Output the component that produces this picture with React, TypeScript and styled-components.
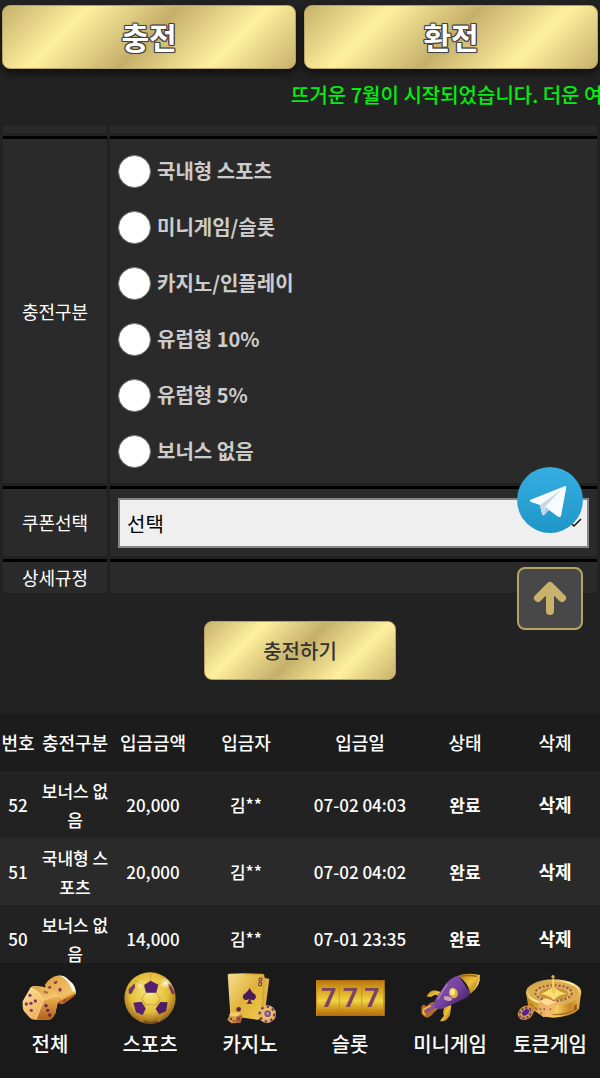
import React from "react";
import styled, { createGlobalStyle } from "styled-components";

const GlobalStyle = createGlobalStyle`
  *, *::before, *::after { box-sizing: border-box; }
  body {
    margin: 0;
    background: #222;
    color: #fff;
    font-family: "Noto Sans CJK KR", "Noto Sans", sans-serif;
  }
  button, select, input { font-family: inherit; }
`;

const gold =
  "linear-gradient(135deg, #c5b06a 0%, #fff09e 25%, #c5b06a 50%, #fff09e 75%, #c5b06a 100%)";

const Page = styled.div`
  display: flex;
  flex-direction: column;
  height: 100vh;
  overflow: hidden;
`;

const TopBar = styled.header`
  display: grid;
  grid-template-columns: 1fr 1fr;
  gap: 8px;
  padding: 5px 2px 0;
`;

const GoldButton = styled.button`
  border: 1px solid #b9a561;
  border-radius: 8px;
  background: ${gold};
  background-origin: border-box;
  cursor: pointer;
`;

const TopButton = styled(GoldButton)`
  height: 64px;
  padding: 0 0 2px;
  box-shadow: 0 4px 8px rgba(0, 0, 0, 0.6);
  color: #fff;
  font-size: 30px;
  font-weight: 700;
  line-height: 44px;
  text-shadow: -1px -1px 0 #444, 0 -1px 0 #444, 1px -1px 0 #444, -1px 0 0 #444,
    1px 0 0 #444, -1px 1px 0 #444, 0 1px 0 #444, 1px 1px 0 #444, 0 0 2px #444;
`;

const Notice = styled.p`
  margin: 0;
  padding: 11px 0 16px 291px;
  overflow: hidden;
  color: #00f010;
  font-size: 20px;
  font-weight: 500;
  line-height: 30px;
  white-space: nowrap;
`;

const Content = styled.main`
  flex: 1;
  min-height: 0;
  overflow-y: auto;
  scrollbar-width: none;
`;

const FormTable = styled.table`
  width: 100%;
  margin-top: -3px;
  border-collapse: separate;
  border-spacing: 3px;
  table-layout: fixed;
`;

const LabelCell = styled.th`
  width: 104px;
  padding: 0;
  border-top: 3px solid #000;
  background: #2a2a2a;
  font-size: 18px;
  font-weight: 400;
  line-height: 31px;
`;

const FieldCell = styled.td`
  padding: 0 8px;
  border-top: 3px solid #000;
  background: #2a2a2a;
`;

const EndCell = styled.td<{ $label?: boolean }>`
  width: ${(p) => (p.$label ? "104px" : "auto")};
  height: 7px;
  padding: 0;
  background: #2a2a2a;
`;

const RadioList = styled.div`
  display: flex;
  flex-direction: column;
  padding: 4px 0;
`;

const RadioLabel = styled.label`
  display: flex;
  align-items: center;
  gap: 6px;
  height: 56px;
  color: #ccc;
  font-size: 20px;
  font-weight: 700;
  line-height: 30px;
`;

const Radio = styled.input`
  appearance: none;
  width: 33px;
  height: 33px;
  margin: 0;
  border: 1px solid #767676;
  border-radius: 50%;
  background: #fff;
  &:checked { box-shadow: inset 0 0 0 8px #fff, inset 0 0 0 20px #0075ff; }
`;

const SelectWrap = styled.div`
  position: relative;
  margin: 9px 0 8px;
`;

const Select = styled.select`
  appearance: none;
  display: block;
  width: 100%;
  height: 50px;
  padding: 0 30px 0 7px;
  border: 2px solid #858585;
  border-radius: 0;
  background: #efefef;
  color: #000;
  font-size: 20px;
`;

const Chevron = styled.svg`
  position: absolute;
  top: 20px;
  right: 7px;
  width: 16px;
  height: 10px;
  pointer-events: none;
`;

const SubmitRow = styled.div`
  display: flex;
  justify-content: center;
  padding: 25px 0 33px;
`;

const SubmitButton = styled(GoldButton)`
  width: 32%;
  height: 59px;
  color: #333;
  font-size: 20px;
  font-weight: 500;
`;

const HistoryTable = styled.table`
  width: 100%;
  border-collapse: collapse;
  table-layout: fixed;
  text-align: center;
`;

const HistoryHead = styled.th<{ $width: number }>`
  width: ${(p) => p.$width}%;
  height: 58px;
  padding: 0;
  background: #1c1c1c;
  font-size: 18px;
  font-weight: 500;
  white-space: nowrap;
`;

const HistoryRow = styled.tr`
  background: #222;
  &:nth-child(even) { background: #2a2a2a; }
`;

const HistoryCell = styled.td<{ $bold?: boolean }>`
  height: 67px;
  padding: 0 4px;
  font-size: 17px;
  font-weight: ${(p) => (p.$bold ? 700 : 500)};
  line-height: 29px;
  word-break: break-all;
`;

const NumberCell = styled(HistoryCell)`
  padding: 0;
  white-space: nowrap;
`;

const DeleteButton = styled.button`
  padding: 0;
  border: 0;
  background: none;
  color: #fff;
  font-size: 18px;
  font-weight: 700;
  cursor: pointer;
`;

const Floating = styled.div`
  position: fixed;
  right: 17px;
  bottom: 448px;
  display: flex;
  flex-direction: column;
  gap: 34px;
`;

const TelegramLink = styled.a`
  display: block;
  height: 66px;
  svg { display: block; width: 66px; height: 66px; }
`;

const UpButton = styled.button`
  display: flex;
  align-items: center;
  justify-content: center;
  width: 66px;
  height: 63px;
  padding: 0;
  border: 2px solid #b7a363;
  border-radius: 8px;
  background: #484848;
  cursor: pointer;
  svg { width: 36px; height: 36px; }
`;

const BottomNav = styled.nav`
  display: grid;
  grid-template-columns: repeat(6, 1fr);
  padding: 9px 0 19px;
  background: #1a1a1a;
`;

const NavLink = styled.a`
  display: flex;
  flex-direction: column;
  align-items: center;
  gap: 3px;
  color: #fff;
  font-size: 20px;
  font-weight: 500;
  line-height: 30px;
  text-decoration: none;
  white-space: nowrap;
  svg { width: 72px; height: 54px; }
`;

const DiceIcon = () => (
  <svg viewBox="42 66 216 162" aria-hidden="true">
    <defs>
      <linearGradient id="diceTop" x1="0" y1="0" x2="1" y2="1">
        <stop offset="0" stopColor="#dd9f3c" />
        <stop offset="1" stopColor="#f8d27c" />
      </linearGradient>
      <linearGradient id="diceLeft" x1="0" y1="0" x2="1" y2="1">
        <stop offset="0" stopColor="#ffe0a0" />
        <stop offset="1" stopColor="#e89a3c" />
      </linearGradient>
      <linearGradient id="diceRight" x1="0" y1="0" x2="0" y2="1">
        <stop offset="0" stopColor="#f0b455" />
        <stop offset="1" stopColor="#b05f1c" />
      </linearGradient>
    </defs>
    <path d="M135 104 Q150 80 178 76 Q187 76 195 81 L218 101 Q229 122 227 133 L203 150 Q188 163 176 158 L138 128Z" fill="url(#diceTop)" />
    <path d="M181 77 Q190 76 200 84 L219 102 Q229 118 227 132 Q218 127 211 107 Q199 86 181 77Z" fill="#fff9ef" />
    <path d="M176 146 L226 127 Q228 134 222 139 L196 158 Q184 166 176 160Z" fill="#b9641f" />
    <path d="M179 144 L225 123 L224 131 L178 154Z" fill="#efb04f" />
    <g fill="#8a3f52">
      <ellipse cx="167" cy="97" rx="6" ry="4" transform="rotate(-35 167 97)" />
      <ellipse cx="149" cy="112" rx="5" ry="4" transform="rotate(-35 149 112)" />
      <ellipse cx="180" cy="119" rx="5" ry="6" />
      <circle cx="194" cy="151" r="4" />
    </g>
    <path d="M92 112 Q98 108 106 108 L128 110 L168 127 Q177 134 177 143 L166 190 Q158 207 148 209 L106 209 Q97 210 90 204 L72 184 Q68 178 68 168 L68 154Z" fill="url(#diceLeft)" />
    <path d="M94 112 Q100 108 110 109 L163 124 Q175 131 175 139 L130 152 Q128 128 94 112Z" fill="url(#diceTop)" />
    <path d="M130 152 L176 138 L166 190 Q158 208 146 209 L109 207Z" fill="url(#diceRight)" />
    <path d="M93 113 Q124 132 130 152 L109 207" fill="none" stroke="#ffe3a0" strokeWidth="2" />
    <g fill="#833a5a">
      <circle cx="90" cy="136" r="5" /><circle cx="106" cy="153" r="5" />
      <circle cx="79" cy="162" r="5" /><circle cx="93" cy="160" r="5" />
      <circle cx="94" cy="181" r="5" />
      <ellipse cx="137" cy="127" rx="8" ry="4" transform="rotate(16 137 127)" fill="#ba704b" />
    </g>
    <g fill="#672746">
      <circle cx="138" cy="167" r="5" /><circle cx="143" cy="181" r="5" /><circle cx="149" cy="195" r="5" />
    </g>
  </svg>
);

const BallIcon = () => (
  <svg viewBox="342 66 216 162" aria-hidden="true">
    <defs>
      <radialGradient id="ballGold" cx=".48" cy=".4" r=".58">
        <stop offset="0" stopColor="#f8e879" />
        <stop offset=".65" stopColor="#e4bd38" />
        <stop offset="1" stopColor="#9d681f" />
      </radialGradient>
      <radialGradient id="ballGlow">
        <stop offset="0" stopColor="#fff" stopOpacity=".95" />
        <stop offset="1" stopColor="#fff3a0" stopOpacity="0" />
      </radialGradient>
      <clipPath id="ballClip"><circle cx="450" cy="144" r="77" /></clipPath>
    </defs>
    <circle cx="450" cy="144" r="77" fill="url(#ballGold)" />
    <g clipPath="url(#ballClip)">
      <g fill="none" stroke="#c4973a" strokeWidth="2">
        <path d="M452 94 V66 M436 128 L425 146 L436 165 M469 127 L481 146 L469 165 M425 146 L437 164 H469 L481 146 M433 104 L404 91 M474 103 L500 91 M437 164 L427 177 M469 164 L477 176 M418 194 L425 219 M485 192 L475 219" />
      </g>
      <path d="M452 92 L475 104 L469 128 H438 L432 105Z" fill="#55206f" />
      <path d="M400 158 L425 155 L437 176 L428 195 L408 187Z" fill="#58206c" />
      <path d="M481 156 L503 157 L498 184 L477 193 L467 176Z" fill="#4f1c65" />
      <path d="M386 117 L404 100 L405 112 L394 132 L386 131Z" fill="#74366f" />
      <path d="M502 101 L510 102 L525 131 L516 132Z" fill="#74336e" />
      <path d="M430 211 L451 216 L474 211 L466 225 H438Z" fill="#76501e" />
      <ellipse cx="497" cy="99" rx="22" ry="18" fill="url(#ballGlow)" />
      <ellipse cx="421" cy="105" rx="15" ry="18" fill="url(#ballGlow)" opacity=".55" />
    </g>
  </svg>
);

const CardsIcon = () => (
  <svg viewBox="42 66 216 162" aria-hidden="true">
    <defs>
      <linearGradient id="cardFace" x1="0" y1="0" x2="1" y2="1">
        <stop offset="0" stopColor="#f8dd8c" />
        <stop offset=".5" stopColor="#e0b23a" />
        <stop offset="1" stopColor="#f1cb4c" />
      </linearGradient>
    </defs>
    <path d="M83 76 Q82 71 88 71 L137 70 L132 180 L91 191Z" fill="#ecd084" />
    <path d="M190 82 L208 87 L196 177 L167 205Z" fill="#e0b244" />
    <path d="M134 73 Q135 70 140 70 L188 72 Q193 73 193 77 L188 190 L130 182Z" fill="#e0b23c" stroke="#b0832a" />
    <path d="M91 77 Q92 72 98 73 L183 77 Q190 78 190 84 L178 206 Q176 211 169 209 L96 199 Q90 197 90 190Z" fill="url(#cardFace)" />
    <path d="M149 114 Q153 126 166 134 Q171 145 161 150 Q156 152 151 147 Q151 156 158 161 H139 Q146 156 147 147 Q137 153 131 147 Q124 137 136 130 Q145 122 149 114Z" fill="#461b58" />
    <path d="M178 84 h8 l-1 9 h-8z M177 97 l8 1 -1 10 -8-1z" fill="none" stroke="#6d314d" strokeWidth="3" />
    <circle cx="116" cy="178" r="7" fill="#5d244e" />
    <path d="M94 187 L123 189 L128 198 L121 218 L94 220 L82 209Z" fill="#d99d43" />
    <path d="M94 187 L123 189 L109 200 L86 196Z" fill="#f5cd73" />
    <path d="M109 200 L127 196 L121 218 L106 220Z" fill="#a96425" />
    <g fill="#704260"><circle cx="93" cy="207" r="4" /><circle cx="101" cy="213" r="3" /><circle cx="116" cy="207" r="4" /></g>
    <circle cx="201" cy="192" r="27" fill="#e6b55d" />
    <circle cx="201" cy="192" r="22" fill="none" stroke="#6c3765" strokeWidth="7" strokeDasharray="7 10" />
    <circle cx="203" cy="191" r="15" fill="#efc66c" />
    <circle cx="203" cy="191" r="10" fill="#815387" />
    <circle cx="203" cy="191" r="5" fill="#b886a3" />
  </svg>
);

const SlotIcon = () => (
  <svg viewBox="342 66 216 162" aria-hidden="true">
    <defs>
      <linearGradient id="slotGold" x1="0" y1="0" x2="0" y2="1">
        <stop offset="0" stopColor="#b9770e" />
        <stop offset=".28" stopColor="#d9a51e" />
        <stop offset=".58" stopColor="#f0d444" />
        <stop offset=".82" stopColor="#cf9219" />
        <stop offset="1" stopColor="#b66d0c" />
      </linearGradient>
    </defs>
    <rect x="348" y="91" width="206" height="106" fill="url(#slotGold)" />
    <path d="M348 93 H554 M348 195 H554" stroke="#bc7615" strokeWidth="4" />
    <path d="M418 94 V195 M485 94 V195" stroke="#c08a1e" strokeWidth="2" />
    <path d="M350 94 V195 M551 94 V195" stroke="#c88b20" strokeWidth="3" />
    <g fill="#7c4262" fontFamily="Roboto, sans-serif" fontWeight="700" fontSize="80" textAnchor="middle">
      <text x="386" y="170">7</text>
      <text x="451" y="170">7</text>
      <text x="516" y="170">7</text>
    </g>
  </svg>
);

const RocketIcon = () => (
  <svg viewBox="42 66 216 162" aria-hidden="true">
    <defs>
      <linearGradient id="rocketBody" x1="0" y1="0" x2="1" y2="1">
        <stop offset="0" stopColor="#8e58b2" />
        <stop offset=".5" stopColor="#7442a0" />
        <stop offset="1" stopColor="#351653" />
      </linearGradient>
      <linearGradient id="rocketGold" x1="0" y1="0" x2="1" y2="1">
        <stop offset="0" stopColor="#b7781a" />
        <stop offset=".5" stopColor="#ecc03c" />
        <stop offset="1" stopColor="#9c5b13" />
      </linearGradient>
    </defs>
    <path d="M118 147 Q111 128 99 137 Q92 143 80 139 Q89 121 104 121 L126 127Z" fill="url(#rocketGold)" />
    <path d="M133 171 Q127 188 132 197 L120 213 Q139 217 150 195 L154 165Z" fill="url(#rocketGold)" />
    <path d="M103 155 Q88 157 80 169 Q67 158 64 172 L64 191 L78 203 Q92 202 101 188 L117 174Z" fill="#b56b21" />
    <path d="M107 158 L89 165 L73 185 Q83 192 93 180 L120 169Z" fill="#8351a7" />
    <path d="M93 167 L72 177 Q66 191 77 195" fill="none" stroke="#f2b651" strokeWidth="5" />
    <path d="M105 150 L139 100 Q155 80 176 77 L211 130 Q203 145 183 151 L127 176 Q107 181 103 166Z" fill="url(#rocketBody)" />
    <path d="M174 77 Q198 67 240 75 Q242 108 211 131 Q205 97 174 77Z" fill="url(#rocketGold)" />
    <path d="M216 125 Q240 105 239 83 L229 108Z" fill="#ffe6a0" />
    <path d="M181 79 Q204 73 231 79" fill="none" stroke="#a56a18" strokeWidth="5" />
    <ellipse cx="160" cy="129" rx="13" ry="16" fill="#e1ae46" transform="rotate(-20 160 129)" />
    <ellipse cx="158" cy="126" rx="7" ry="10" fill="#ffe78b" />
    <path d="M132 139 Q153 136 157 149 Q146 157 132 148Z" fill="#d5a1bb" />
    <path d="M142 102 Q128 122 113 148" fill="none" stroke="#a880cc" strokeWidth="4" />
  </svg>
);

const RouletteIcon = () => (
  <svg viewBox="342 66 216 162" aria-hidden="true">
    <defs>
      <linearGradient id="wheelSide" x1="0" y1="0" x2="1" y2="0">
        <stop offset="0" stopColor="#c48b25" />
        <stop offset=".55" stopColor="#f7cf60" />
        <stop offset=".8" stopColor="#c78524" />
        <stop offset="1" stopColor="#edbb48" />
      </linearGradient>
      <linearGradient id="wheelTop" x1="0" y1="0" x2="1" y2="1">
        <stop offset="0" stopColor="#b77b25" />
        <stop offset=".5" stopColor="#fff0a0" />
        <stop offset="1" stopColor="#c48a2a" />
      </linearGradient>
    </defs>
    <path d="M378 127 L384 166 Q419 202 460 203 Q514 201 537 177 L543 129Z" fill="url(#wheelSide)" />
    <ellipse cx="461" cy="127" rx="83" ry="39" fill="url(#wheelTop)" />
    <ellipse cx="461" cy="127" rx="74" ry="32" fill="#dbab46" />
    <ellipse cx="461" cy="129" rx="62" ry="27" fill="#e6bd62" />
    <ellipse cx="461" cy="129" rx="55" ry="23" fill="none" stroke="#a2614a" strokeWidth="7" strokeDasharray="8 4" />
    <ellipse cx="461" cy="131" rx="44" ry="19" fill="#c99434" />
    <path d="M421 132 Q448 122 461 108 Q471 124 500 131 Q475 134 461 150 Q449 136 421 132Z" fill="#f8df73" />
    <path d="M455 91 L460 84 L464 92 L463 120 Q471 126 461 129 Q452 126 457 119Z" fill="#f8da66" stroke="#b88627" />
    <circle cx="459" cy="80" r="5" fill="#e7b447" />
    <path d="M389 161 Q422 191 462 194 Q508 194 533 174" fill="none" stroke="#a86d20" strokeWidth="4" />
    <path d="M420 153 L438 145 L469 157 L462 192 L431 202 L411 187Z" fill="#eab367" />
    <path d="M420 153 L438 145 L469 157 L441 168Z" fill="#ffda91" />
    <path d="M441 168 L469 157 L462 192 L435 201Z" fill="#f3b86b" />
    <g fill="#9c5f4d"><circle cx="421" cy="178" r="3" /><circle cx="433" cy="177" r="3" /><circle cx="424" cy="190" r="3" /><circle cx="451" cy="178" r="3" /></g>
    <ellipse cx="377" cy="188" rx="25" ry="20" fill="#d69b39" transform="rotate(-35 377 188)" />
    <ellipse cx="376" cy="189" rx="19" ry="14" fill="none" stroke="#6d3e7b" strokeWidth="6" strokeDasharray="7 5" transform="rotate(-35 376 189)" />
    <ellipse cx="377" cy="187" rx="12" ry="8" fill="#55258c" transform="rotate(-35 377 187)" />
    <path d="M394 167 l10 4 -2 15 -9 2z" fill="#ce8a35" />
    <path d="M523 166 l8 -4 -2 15 -9 5z" fill="#9a5b2a" />
  </svg>
);

const categories = ["국내형 스포츠", "미니게임/슬롯", "카지노/인플레이", "유럽형 10%", "유럽형 5%", "보너스 없음"];

const columns = [
  { name: "번호", width: 6 },
  { name: "충전구분", width: 13 },
  { name: "입금금액", width: 13 },
  { name: "입금자", width: 18 },
  { name: "입금일", width: 20 },
  { name: "상태", width: 15 },
  { name: "삭제", width: 15 },
];

const deposits = [
  { no: 52, kind: "보너스 없음", amount: "20,000", name: "김**", date: "07-02 04:03" },
  { no: 51, kind: "국내형 스포츠", amount: "20,000", name: "김**", date: "07-02 04:02" },
  { no: 50, kind: "보너스 없음", amount: "14,000", name: "김**", date: "07-01 23:35" },
];

const menu = [
  { name: "전체", Icon: DiceIcon },
  { name: "스포츠", Icon: BallIcon },
  { name: "카지노", Icon: CardsIcon },
  { name: "슬롯", Icon: SlotIcon },
  { name: "미니게임", Icon: RocketIcon },
  { name: "토큰게임", Icon: RouletteIcon },
];

export default function App() {
  return (
    <Page>
      <GlobalStyle />
      <TopBar>
        <TopButton type="button">충전</TopButton>
        <TopButton type="button">환전</TopButton>
      </TopBar>
      <Notice>뜨거운 7월이 시작되었습니다. 더운 여</Notice>

      <Content>
        <FormTable>
          <tbody>
            <tr>
              <EndCell $label />
              <EndCell />
            </tr>
            <tr>
              <LabelCell scope="row" id="kind-label">충전구분</LabelCell>
              <FieldCell>
                <RadioList role="radiogroup" aria-labelledby="kind-label">
                  {categories.map((c) => (
                    <RadioLabel key={c}>
                      <Radio type="radio" name="kind" value={c} />
                      {c}
                    </RadioLabel>
                  ))}
                </RadioList>
              </FieldCell>
            </tr>
            <tr>
              <LabelCell scope="row"><label htmlFor="coupon">쿠폰선택</label></LabelCell>
              <FieldCell>
                <SelectWrap>
                  <Select id="coupon"><option>선택</option></Select>
                  <Chevron viewBox="0 0 16 10" aria-hidden="true">
                    <path d="M1 1 L8 8 L15 1" fill="none" stroke="#111" strokeWidth="1.5" />
                  </Chevron>
                </SelectWrap>
              </FieldCell>
            </tr>
            <tr>
              <LabelCell scope="row">상세규정</LabelCell>
              <FieldCell />
            </tr>
          </tbody>
        </FormTable>

        <SubmitRow>
          <SubmitButton type="button">충전하기</SubmitButton>
        </SubmitRow>

        <HistoryTable>
          <thead>
            <tr>
              {columns.map((c) => (
                <HistoryHead key={c.name} scope="col" $width={c.width}>{c.name}</HistoryHead>
              ))}
            </tr>
          </thead>
          <tbody>
            {deposits.map((d) => (
              <HistoryRow key={d.no}>
                <NumberCell>{d.no}</NumberCell>
                <HistoryCell>{d.kind}</HistoryCell>
                <NumberCell>{d.amount}</NumberCell>
                <NumberCell>{d.name}</NumberCell>
                <NumberCell>{d.date}</NumberCell>
                <NumberCell $bold>완료</NumberCell>
                <NumberCell><DeleteButton type="button">삭제</DeleteButton></NumberCell>
              </HistoryRow>
            ))}
          </tbody>
        </HistoryTable>
      </Content>

      <BottomNav>
        {menu.map(({ name, Icon }) => (
          <NavLink key={name} href="#">
            <Icon />
            {name}
          </NavLink>
        ))}
      </BottomNav>

      <Floating>
        <TelegramLink href="#" aria-label="Telegram">
          <svg viewBox="0 0 66 66" aria-hidden="true">
            <defs>
              <linearGradient id="telegramBlue" x1="0" y1="0" x2="0" y2="1">
                <stop offset="0" stopColor="#37aee2" />
                <stop offset="1" stopColor="#1e96c8" />
              </linearGradient>
            </defs>
            <circle cx="33" cy="33" r="33" fill="url(#telegramBlue)" />
            <path d="M13 33 L48 19 Q50 19 49 22 L44 49 Q43 51 40 49 L32 43 L27 48 Q26 49 25 47 L23 38 L14 35 Q12 34 13 33Z" fill="#f8fbfe" />
            <path d="M23 38 L44 23 L29 39 L27 48 Q25 48 25 46Z" fill="#c8daea" />
            <path d="M29 40 L27 48 L32 43Z" fill="#a9c9dd" />
          </svg>
        </TelegramLink>
        <UpButton type="button" aria-label="맨 위로">
          <svg viewBox="0 0 36 36" aria-hidden="true">
            <path d="M18 30 V6 M6 17 L18 5 L30 17" fill="none" stroke="#c9b26b" strokeWidth="8" strokeLinecap="round" strokeLinejoin="round" />
          </svg>
        </UpButton>
      </Floating>
    </Page>
  );
}
